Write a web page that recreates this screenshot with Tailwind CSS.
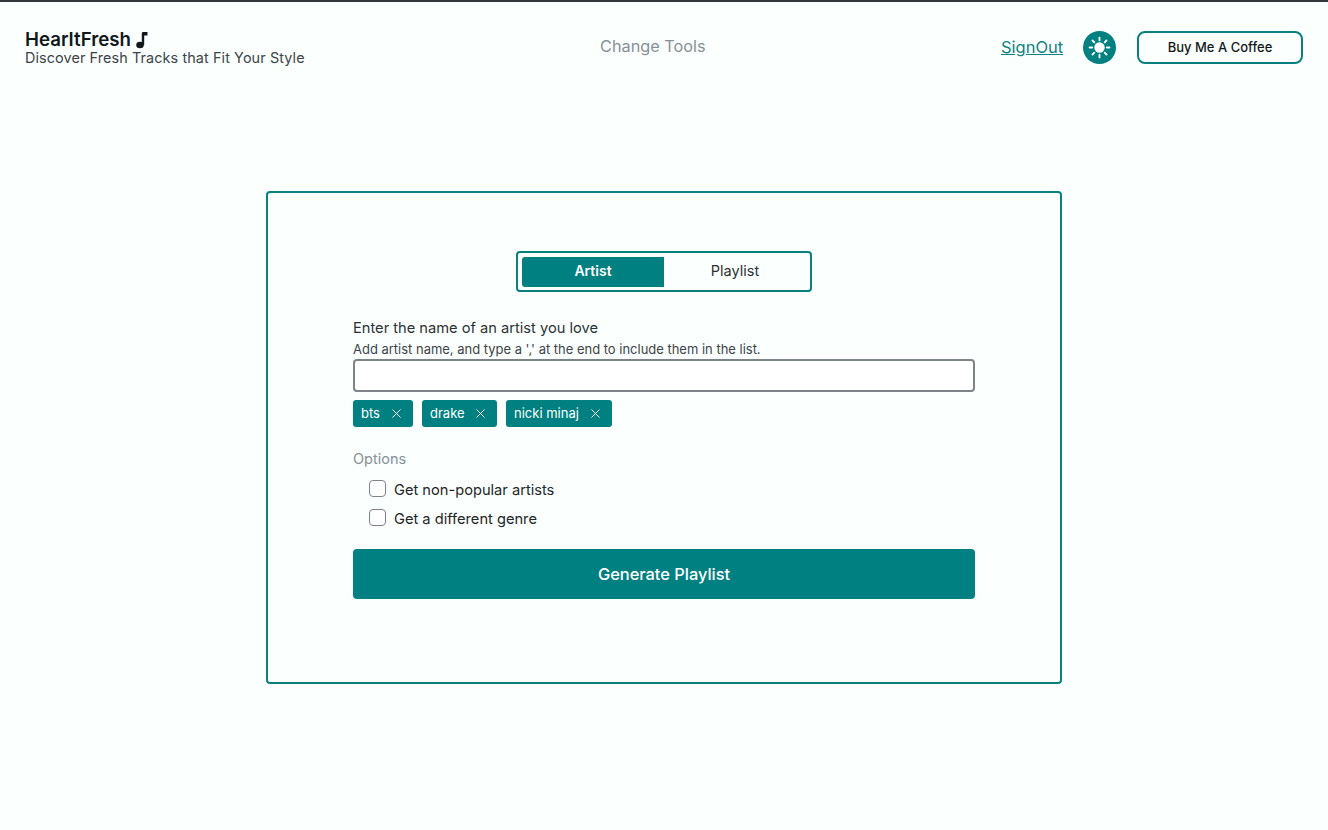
<!doctype html>
<html lang="en">
<head>
<meta charset="utf-8">
<script src="https://cdn.jsdelivr.net/npm/@tailwindcss/browser@4"></script>
<title>HearItFresh</title>
</head>
<body class="h-[830px] overflow-hidden bg-[#fbfffe] font-['Inter',sans-serif] text-[#1a1f23]">
<div class="h-[2px] bg-[#33383c]"></div>
<header class="flex h-[88px] items-start justify-between px-[25px] pt-[26px]">
  <div>
    <div class="flex h-[22px] items-center gap-[4px] pt-[1px] text-[18.700px] leading-[22px] font-semibold text-[#11181c]">
      <span>HearItFresh</span>
      <svg class="h-[18px] w-[14px]" viewBox="0 0 14 18" fill="#11181c"><ellipse cx="5" cy="14" rx="3.8" ry="3.3"/><path d="M6.800 14V2.500c0-1 .6-1.500 1.500-1.500h4.200v3.500H9.200V14z"/></svg>
    </div>
    <div class="mt-[-1px] text-[14.400px] leading-[17px] tracking-[0.1px] text-[#3b4449]">Discover Fresh Tracks that Fit Your Style</div>
  </div>
  <a class="mt-[9px] text-[16.300px] leading-[19px] text-[#889096]">Change Tools</a>
  <div class="flex w-[302px] items-center pt-[3px]">
    <a class="w-[62px] text-[16.500px] leading-[19px] whitespace-nowrap text-[#0f8383] underline">SignOut</a>
    <span class="ml-[20px] flex h-[33px] w-[33px] items-center justify-center rounded-full bg-[#008080]">
      <svg class="h-[25px] w-[25px]" viewBox="0 0 24 24" fill="none" stroke="#fff" stroke-width="1.800" stroke-linecap="round"><circle cx="12" cy="12" r="5" fill="#fff" stroke="none"/><path d="M12 2.500v2.500M12 19v2.500M2.500 12H5M19 12h2.500M5.300 5.300 7 7M17 17l1.700 1.700M5.300 18.700 7 17M17 7l1.700-1.700"/></svg>
    </span>
    <button class="ml-[21px] h-[33px] w-[166px] rounded-[8px] border-2 border-[#0a7f80] text-[13px] font-medium text-[#11181c]">Buy Me A Coffee</button>
  </div>
</header>
<main class="flex justify-center pt-[101px]">
  <section class="flex h-[493px] w-[796px] flex-col items-center rounded-[4px] border-2 border-[#0a7f80] px-[85px] pt-[58px]">
    <div class="flex h-[41px] w-[296px] rounded-[4px] border-2 border-[#0a7f80] px-[4px] pt-[4px] pb-[3px] text-[14.500px]">
      <button class="w-1/2 rounded-l-[3px] bg-[#008080] pb-[4px] text-[14px] font-semibold text-white">Artist</button>
      <button class="w-1/2 pb-[2px] text-[#2c3135]">Playlist</button>
    </div>
    <div class="mt-[28px] w-[622px]">
      <label class="block text-[14.650px] leading-[17px] text-[#2c3135]">Enter the name of an artist you love</label>
      <p class="mt-[5px] text-[12.980px] leading-[15px] text-[#3b4449]">Add artist name, and type a ',' at the end to include them in the list.</p>
      <input type="text" class="mt-[2px] block h-[33px] w-full rounded-[4px] border-2 border-[#7c848a] bg-white" aria-label="Artist name">
      <div class="mt-[8px] flex gap-[9px] text-[13px] text-white">
        <span class="flex h-[27px] w-[60px] items-center justify-between rounded-[3px] bg-[#008080] pr-[12px] pl-[8px]">bts<svg class="h-[9px] w-[9px]" viewBox="0 0 9 9" stroke="#fff" stroke-width="1"><path d="M.5.500l8 8M8.500.500l-8 8"/></svg></span>
        <span class="flex h-[27px] w-[75px] items-center justify-between rounded-[3px] bg-[#008080] pr-[12px] pl-[8px]">drake<svg class="h-[9px] w-[9px]" viewBox="0 0 9 9" stroke="#fff" stroke-width="1"><path d="M.5.500l8 8M8.500.500l-8 8"/></svg></span>
        <span class="flex h-[27px] w-[106px] items-center justify-between rounded-[3px] bg-[#008080] pr-[12px] pl-[8px]">nicki minaj<svg class="h-[9px] w-[9px]" viewBox="0 0 9 9" stroke="#fff" stroke-width="1"><path d="M.5.500l8 8M8.500.500l-8 8"/></svg></span>
      </div>
      <div class="mt-[23px] text-[14.500px] leading-[17px] text-[#889096]">Options</div>
      <div class="mt-[14px] flex flex-col gap-[11px] pl-[16px] text-[14.650px] leading-[17px] text-[#1f2528]">
        <label class="flex items-center gap-[8px]"><span class="mt-[-4px] h-[17px] w-[17px] rounded-[4px] border border-[#7c848a] bg-white"></span><span class="pt-[1px]">Get non-popular artists</span></label>
        <label class="flex items-center gap-[8px]"><span class="mt-[-4px] h-[17px] w-[17px] rounded-[4px] border border-[#7c848a] bg-white"></span><span class="pt-[1px]">Get a different genre</span></label>
      </div>
      <button class="mt-[21px] h-[50px] w-full rounded-[4px] bg-[#008080] text-[16.400px] font-medium text-white">Generate Playlist</button>
    </div>
  </section>
</main>
</body>
</html>
